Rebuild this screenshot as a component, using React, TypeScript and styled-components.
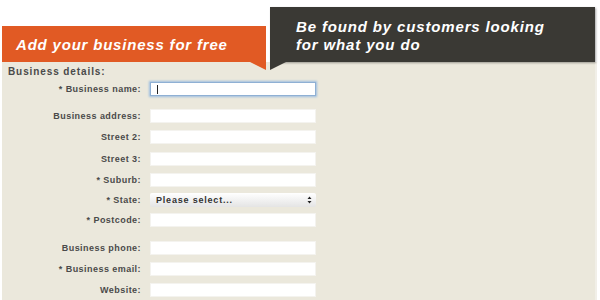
import styled, { createGlobalStyle } from "styled-components";

const orange = "#e15a24";
const dark = "#3a3934";
const beige = "#ebe8dc";
const labelColour = "#4a4a4a";

const GlobalStyle = createGlobalStyle`
  html, body {
    margin: 0;
    padding: 0;
    background: #fff;
    font-family: "Liberation Sans", Arial, sans-serif;
  }
`;

const Page = styled.div`
  width: 600px;
  height: 300px;
  overflow: hidden;
  padding: 0 3px 0 2px;
  box-sizing: border-box;
  display: flex;
  flex-direction: column;
`;

const Header = styled.div`
  display: flex;
  align-items: flex-end;
  gap: 4px;
  padding: 7px 2px 0 0;
  position: relative;
  z-index: 2;
`;

const OrangeTab = styled.div`
  position: relative;
  width: 264px;
  height: 36px;
  background: ${orange};
  display: flex;
  align-items: center;
  padding-left: 14px;
  box-sizing: border-box;
  color: #fff;
  font-size: 15px;
  font-weight: bold;
  font-style: italic;
  letter-spacing: 0.8px;

  &::after {
    content: "";
    position: absolute;
    right: 0;
    top: 100%;
    border-top: 8px solid ${orange};
    border-left: 16px solid transparent;
  }
`;

const DarkTab = styled.div`
  position: relative;
  flex: 1;
  height: 55px;
  background: ${dark};
  box-shadow: 1px 1px 2px rgba(0, 0, 0, 0.35);
  padding: 11px 0 0 26px;
  box-sizing: border-box;
  color: #fff;
  font-size: 15px;
  line-height: 18px;
  font-weight: bold;
  font-style: italic;
  letter-spacing: 0.85px;

  &::after {
    content: "";
    position: absolute;
    left: 0;
    top: 100%;
    border-top: 8px solid ${dark};
    border-right: 16px solid transparent;
  }
`;

const Panel = styled.div`
  flex: 1;
  background: ${beige};
  border-right: 2px solid #f1efe8;
  padding: 4px 0 0 6px;
`;

const Heading = styled.div`
  font-size: 10px;
  line-height: 12px;
  font-weight: bold;
  letter-spacing: 0.9px;
  color: ${labelColour};
`;

const Row = styled.div<{ $space: number }>`
  display: grid;
  grid-template-columns: 133px 166px;
  column-gap: 9px;
  align-items: center;
  height: 14px;
  margin-top: ${(p) => p.$space}px;
`;

const Label = styled.label`
  text-align: right;
  font-size: 9px;
  font-weight: bold;
  letter-spacing: 0.45px;
  color: ${labelColour};
  white-space: nowrap;
`;

const Field = styled.div`
  position: relative;
  height: 14px;
`;

const Input = styled.input<{ $focused?: boolean }>`
  display: block;
  width: 100%;
  height: 14px;
  box-sizing: border-box;
  border: 1px solid ${(p) => (p.$focused ? "#8fb0d4" : "#f4f3ef")};
  box-shadow: ${(p) => (p.$focused ? "0 0 2px 1px #9dbde0" : "none")};
  background: #fff;
  outline: none;
  padding: 0 6px;
`;

const Caret = styled.span`
  position: absolute;
  left: 7px;
  top: 3px;
  width: 1px;
  height: 9px;
  background: #222;
`;

const Select = styled.select`
  display: block;
  width: 100%;
  height: 14px;
  box-sizing: border-box;
  appearance: none;
  border: none;
  border-radius: 2px;
  background: linear-gradient(#ffffff, #e4e4e4);
  padding: 0 6px;
  font-family: "Liberation Sans", Arial, sans-serif;
  font-size: 9px;
  font-weight: bold;
  letter-spacing: 0.8px;
  color: #333;
  outline: none;
`;

const Arrows = styled.svg`
  position: absolute;
  right: 4px;
  top: 3px;
  pointer-events: none;
`;

type Item = { label: string; space: number; kind?: "focus" | "select" };

const fields: Item[] = [
  { label: "* Business name:", space: 4, kind: "focus" },
  { label: "Business address:", space: 13 },
  { label: "Street 2:", space: 7 },
  { label: "Street 3:", space: 8 },
  { label: "* Suburb:", space: 7 },
  { label: "* State:", space: 6, kind: "select" },
  { label: "* Postcode:", space: 6 },
  { label: "Business phone:", space: 14 },
  { label: "* Business email:", space: 7 },
  { label: "Website:", space: 7 },
];

export default function App() {
  return (
    <>
      <GlobalStyle />
      <Page>
        <Header>
          <OrangeTab>Add your business for free</OrangeTab>
          <DarkTab>
            Be found by customers looking
            <br />
            for what you do
          </DarkTab>
        </Header>
        <Panel>
          <Heading>Business details:</Heading>
          {fields.map((f) => (
            <Row key={f.label} $space={f.space}>
              <Label>{f.label}</Label>
              <Field>
                {f.kind === "select" ? (
                  <>
                    <Select defaultValue="">
                      <option value="">Please select...</option>
                    </Select>
                    <Arrows width="5" height="8" viewBox="0 0 5 8">
                      <path d="M0.5 3 L2.5 0.5 L4.5 3 Z M0.5 5 L2.5 7.5 L4.5 5 Z" fill="#222" />
                    </Arrows>
                  </>
                ) : (
                  <>
                    <Input $focused={f.kind === "focus"} />
                    {f.kind === "focus" && <Caret />}
                  </>
                )}
              </Field>
            </Row>
          ))}
        </Panel>
      </Page>
    </>
  );
}
